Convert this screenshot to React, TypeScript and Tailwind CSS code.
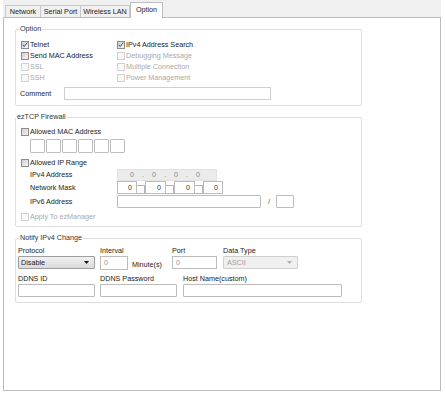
import React from "react";

function Cb({ checked, disabled }: { checked?: boolean; disabled?: boolean }) {
  return (
    <span
      className={
        disabled
          ? "relative block w-[8px] h-[8px] shrink-0 border border-[#d2d2d2] bg-[#f8f8f8]"
          : "relative block w-[8px] h-[8px] shrink-0 border border-[#8c8c8c] bg-linear-to-br from-[#cfcfcf] to-[#f6f6f6]"
      }
    >
      {checked && (
        <svg viewBox="0 0 8 8" className="absolute left-0 top-0 w-[6px] h-[6px]">
          <path d="M1 3.6 L3 6 L7 0.8" fill="none" stroke="#3f4c6b" strokeWidth="1.3" />
        </svg>
      )}
    </span>
  );
}

function CbRow({ label, checked, disabled }: { label: string; checked?: boolean; disabled?: boolean }) {
  return (
    <div className="flex items-center gap-[1px] h-[11px]">
      <Cb checked={checked} disabled={disabled} />
      <span className={disabled ? "text-[#a8a8a8]" : "text-[#222]"}>{label}</span>
    </div>
  );
}

function Group({ title, left, children }: { title: string; left: string; children: React.ReactNode }) {
  return (
    <div className="relative w-[347px] border border-[#dedede] rounded-[2px]">
      <span className={`absolute -top-[5px] ${left} bg-white px-px text-[#333]`}>{title}</span>
      {children}
    </div>
  );
}

function Input({ className, children }: { className: string; children?: React.ReactNode }) {
  return <div className={`border border-[#bcbcbc] bg-white flex items-center ${className}`}>{children}</div>;
}

function Arrow({ color }: { color: string }) {
  return (
    <svg viewBox="0 0 5 3" className="w-[5px] h-[3px]">
      <path d="M0 0 H5 L2.5 3 Z" fill={color} />
    </svg>
  );
}

export default function App() {
  return (
    <div className="w-[446px] h-[409px] bg-white font-['Liberation_Sans',Arial,sans-serif] text-[7.2px] leading-none text-[#222]">
      <div className="pl-[3px] pr-[5px]">
        {/* tab strip */}
        <div className="h-[17px] bg-[#f0f0f0] flex items-end pl-[2px]">
          <div className="w-[36px] h-[12px] border border-b-0 border-[#c8c8c8] bg-[#f0f0f0] flex items-center justify-center">
            Network
          </div>
          <div className="w-[40px] h-[12px] border border-l-0 border-b-0 border-[#c8c8c8] bg-[#f0f0f0] flex items-center justify-center">
            Serial Port
          </div>
          <div className="w-[49px] h-[12px] border border-l-0 border-b-0 border-[#c8c8c8] bg-[#f0f0f0] flex items-center justify-center">
            Wireless LAN
          </div>
          <div className="relative z-10 -mb-px w-[33px] h-[16px] border border-b-0 border-[#bdbdbd] bg-white flex items-center justify-center pb-[2px]">
            Option
          </div>
        </div>
        {/* panel */}
        <div className="h-[374px] border border-[#bdbdbd] bg-white pl-[11px] pt-[11px] flex flex-col gap-[11px]">
          {/* Option */}
          <Group title="Option" left="left-[3px]">
            <div className="pt-[9px] pl-[5px] grid grid-cols-[96px_1fr]">
              <CbRow label="Telnet" checked />
              <CbRow label="IPv4 Address Search" checked />
              <CbRow label="Send MAC Address" />
              <CbRow label="Debugging Message" disabled />
              <CbRow label="SSL" disabled />
              <CbRow label="Multiple Connection" disabled />
              <CbRow label="SSH" disabled />
              <CbRow label="Power Management" disabled />
            </div>
            <div className="flex items-center mt-[4px] pl-[4px] pb-[5px]">
              <span className="w-[44px]">Comment</span>
              <Input className="w-[207px] h-[13px] border-[#cfcfcf]" />
            </div>
          </Group>

          {/* ezTCP Firewall */}
          <Group title="ezTCP Firewall" left="left-0">
            <div className="pt-[8px] pl-[5px] pb-[4px] flex flex-col">
              <CbRow label="Allowed MAC Address" />
              <div className="flex gap-[1px] mt-[2px] pl-[9px]">
                <div className="w-[15px] h-[14px] border border-[#bdbdbd] rounded-[1px]" />
                <div className="w-[15px] h-[14px] border border-[#bdbdbd] rounded-[1px]" />
                <div className="w-[15px] h-[14px] border border-[#bdbdbd] rounded-[1px]" />
                <div className="w-[15px] h-[14px] border border-[#bdbdbd] rounded-[1px]" />
                <div className="w-[15px] h-[14px] border border-[#bdbdbd] rounded-[1px]" />
                <div className="w-[15px] h-[14px] border border-[#bdbdbd] rounded-[1px]" />
              </div>
              <div className="mt-[4px]">
                <CbRow label="Allowed IP Range" />
              </div>
              <div className="flex items-center mt-[1px] pl-[9px] h-[12px]">
                <span className="w-[87px]">IPv4 Address</span>
                <div className="w-[100px] h-[12px] bg-[#ebebeb] border border-[#e2e2e2] flex items-center text-[#8a8a8a]">
                  <span className="ml-[12px]">0</span>
                  <span className="ml-[8px]">.</span>
                  <span className="ml-[8px]">0</span>
                  <span className="ml-[8px]">.</span>
                  <span className="ml-[8px]">0</span>
                  <span className="ml-[8px]">.</span>
                  <span className="ml-[8px]">0</span>
                </div>
              </div>
              <div className="flex items-center pl-[9px] h-[13px]">
                <span className="w-[87px]">Network Mask</span>
                <div className="flex items-end h-[13px]">
                  <Input className="w-[20px] h-[13px] justify-end pr-[4px] text-[#333]">0</Input>
                  <div className="w-[8px] h-[9px] border border-l-0 border-[#b5b5b5]" />
                  <Input className="w-[21px] h-[13px] justify-end pr-[4px] text-[#333]">0</Input>
                  <div className="w-[8px] h-[9px] border border-l-0 border-[#b5b5b5]" />
                  <Input className="w-[21px] h-[13px] justify-end pr-[4px] text-[#333]">0</Input>
                  <div className="w-[8px] h-[9px] border border-l-0 border-[#b5b5b5]" />
                  <Input className="w-[20px] h-[13px] justify-end pr-[4px] text-[#333]">0</Input>
                </div>
              </div>
              <div className="flex items-center mt-[1px] pl-[9px] h-[13px]">
                <span className="w-[87px]">IPv6 Address</span>
                <Input className="w-[144px] h-[13px] rounded-[1px]" />
                <span className="ml-[7px] text-[#555]">/</span>
                <Input className="ml-[6px] w-[18px] h-[13px] rounded-[1px]" />
              </div>
              <div className="mt-[3px]">
                <CbRow label="Apply To ezManager" disabled />
              </div>
            </div>
          </Group>

          {/* Notify */}
          <Group title="Notify IPv4 Change" left="left-[3px]">
            <div className="pt-[7px] pl-[2px] pb-[5px] flex flex-col">
              <div className="flex">
                <div className="w-[77px] flex flex-col">
                  <span className="h-[10px] flex items-center">Protocol</span>
                  <div className="h-[13px] border border-[#9e9e9e] rounded-[1px] bg-linear-to-b from-[#f2f2f2] to-[#dadada] flex items-center justify-between pl-[2px] pr-[5px]">
                    <span>Disable</span>
                    <Arrow color="#111" />
                  </div>
                </div>
                <div className="ml-[5px] w-[72px] flex flex-col">
                  <span className="h-[10px] flex items-center">Interval</span>
                  <div className="flex items-end">
                    <Input className="w-[28px] h-[14px] pl-[3px] text-[#9a9a9a] items-start pt-[2px]">0</Input>
                    <span className="ml-[4px] mb-[2px]">Minute(s)</span>
                  </div>
                </div>
                <div className="w-[45px] flex flex-col">
                  <span className="h-[10px] flex items-center">Port</span>
                  <Input className="w-[45px] h-[13px] pl-[3px] text-[#9a9a9a] items-start pt-[2px]">0</Input>
                </div>
                <div className="ml-[6px] w-[75px] flex flex-col">
                  <span className="h-[10px] flex items-center">Data Type</span>
                  <div className="h-[13px] border border-[#d0d0d0] rounded-[1px] bg-[#f0f0f0] flex items-center justify-between pl-[3px] pr-[5px] text-[#a0a0a0]">
                    <span>ASCII</span>
                    <Arrow color="#b0b0b0" />
                  </div>
                </div>
              </div>
              <div className="flex mt-[4px]">
                <div className="w-[77px] flex flex-col">
                  <span className="h-[10px] flex items-center">DDNS ID</span>
                  <Input className="w-[77px] h-[13px] rounded-[1px]" />
                </div>
                <div className="ml-[5px] w-[77px] flex flex-col">
                  <span className="h-[10px] flex items-center">DDNS Password</span>
                  <Input className="w-[77px] h-[13px] rounded-[1px]" />
                </div>
                <div className="ml-[6px] w-[159px] flex flex-col">
                  <span className="h-[10px] flex items-center">Host Name(custom)</span>
                  <Input className="w-[159px] h-[13px] rounded-[1px]" />
                </div>
              </div>
            </div>
          </Group>
        </div>
      </div>
    </div>
  );
}
